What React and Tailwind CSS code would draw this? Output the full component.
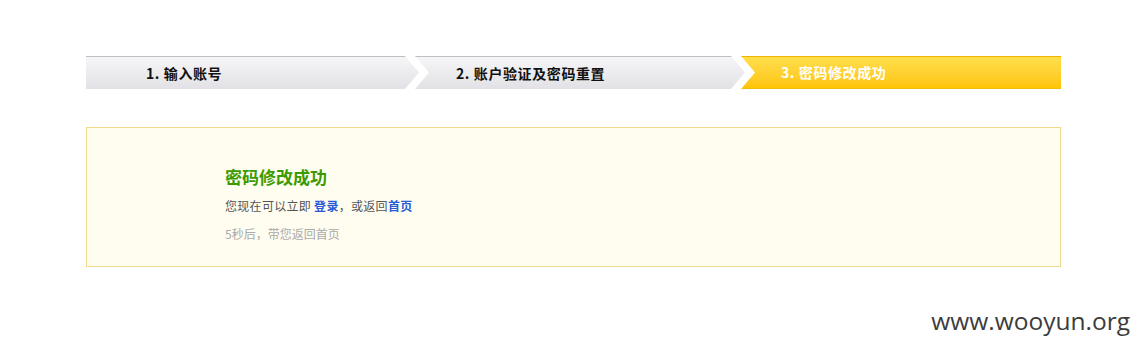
import React from "react";

const steps = [
  { label: "1. 输入账号", pad: "pl-[60px]", w: "w-[333px]", active: false, first: true },
  { label: "2. 账户验证及密码重置", pad: "pl-[41px]", w: "w-[330px]", active: false },
  { label: "3. 密码修改成功", pad: "pl-[40px]", w: "flex-1", active: true, last: true },
];

const clipFirst = "[clip-path:polygon(0_0,calc(100%-14px)_0,100%_50%,calc(100%-14px)_100%,0_100%)]";
const clipMid = "[clip-path:polygon(0_0,calc(100%-14px)_0,100%_50%,calc(100%-14px)_100%,0_100%,14px_50%)]";
const clipLast = "[clip-path:polygon(0_0,100%_0,100%_100%,0_100%,14px_50%)]";

const Step = ({ step }) => {
  const clip = step.first ? clipFirst : step.last ? clipLast : clipMid;
  const colors = step.active
    ? "bg-gradient-to-b from-[#ffdf4a] to-[#ffc400] border-t border-[#f0b400] border-b border-b-[#f2be10] text-white"
    : "bg-gradient-to-b from-[#f6f6f8] to-[#e2e2e6] border-t border-[#bfbfc1] text-[#111]";
  return (
    <div
      className={`${step.w} ${step.first ? "" : "-ml-[4px]"} ${clip} ${colors} ${step.pad} h-[33px] flex items-center text-[14px] font-bold tracking-[0.6px] whitespace-pre shrink-0`}
    >
      {step.label}
    </div>
  );
};

export default function App() {
  return (
    <div className="w-[1139px] h-[350px] bg-white relative font-['Noto_Sans_CJK_SC',sans-serif]">
      <div className="pt-[56px] px-[86px] w-[1147px]">
        <div className="flex w-[975px]">
          {steps.map((s) => (
            <Step key={s.label} step={s} />
          ))}
        </div>

        <div className="mt-[38px] w-[975px] h-[140px] border border-[#f1d98e] bg-[#fffdf0] pl-[138px] pt-[38px]">
          <h2 className="text-[17px] leading-[22px] font-bold text-[#3b9a00]">密码修改成功</h2>
          <p className="mt-[9px] text-[12px] leading-[18px] text-[#555] tracking-[0.3px]">
            您现在可以立即 <a href="#" className="text-[#2a5bd7] font-bold">登录</a>，或返回
            <a href="#" className="text-[#2a5bd7] font-bold">首页</a>
          </p>
          <p className="mt-[10px] text-[12px] leading-[18px] text-[#aaa]">5秒后，带您返回首页</p>
        </div>
      </div>

      <div className="absolute right-[9px] top-[305px] text-[24.5px] leading-[32px] text-[#3c3c3c] font-['Open_Sans',sans-serif]">
        www.wooyun.org
      </div>
    </div>
  );
}
